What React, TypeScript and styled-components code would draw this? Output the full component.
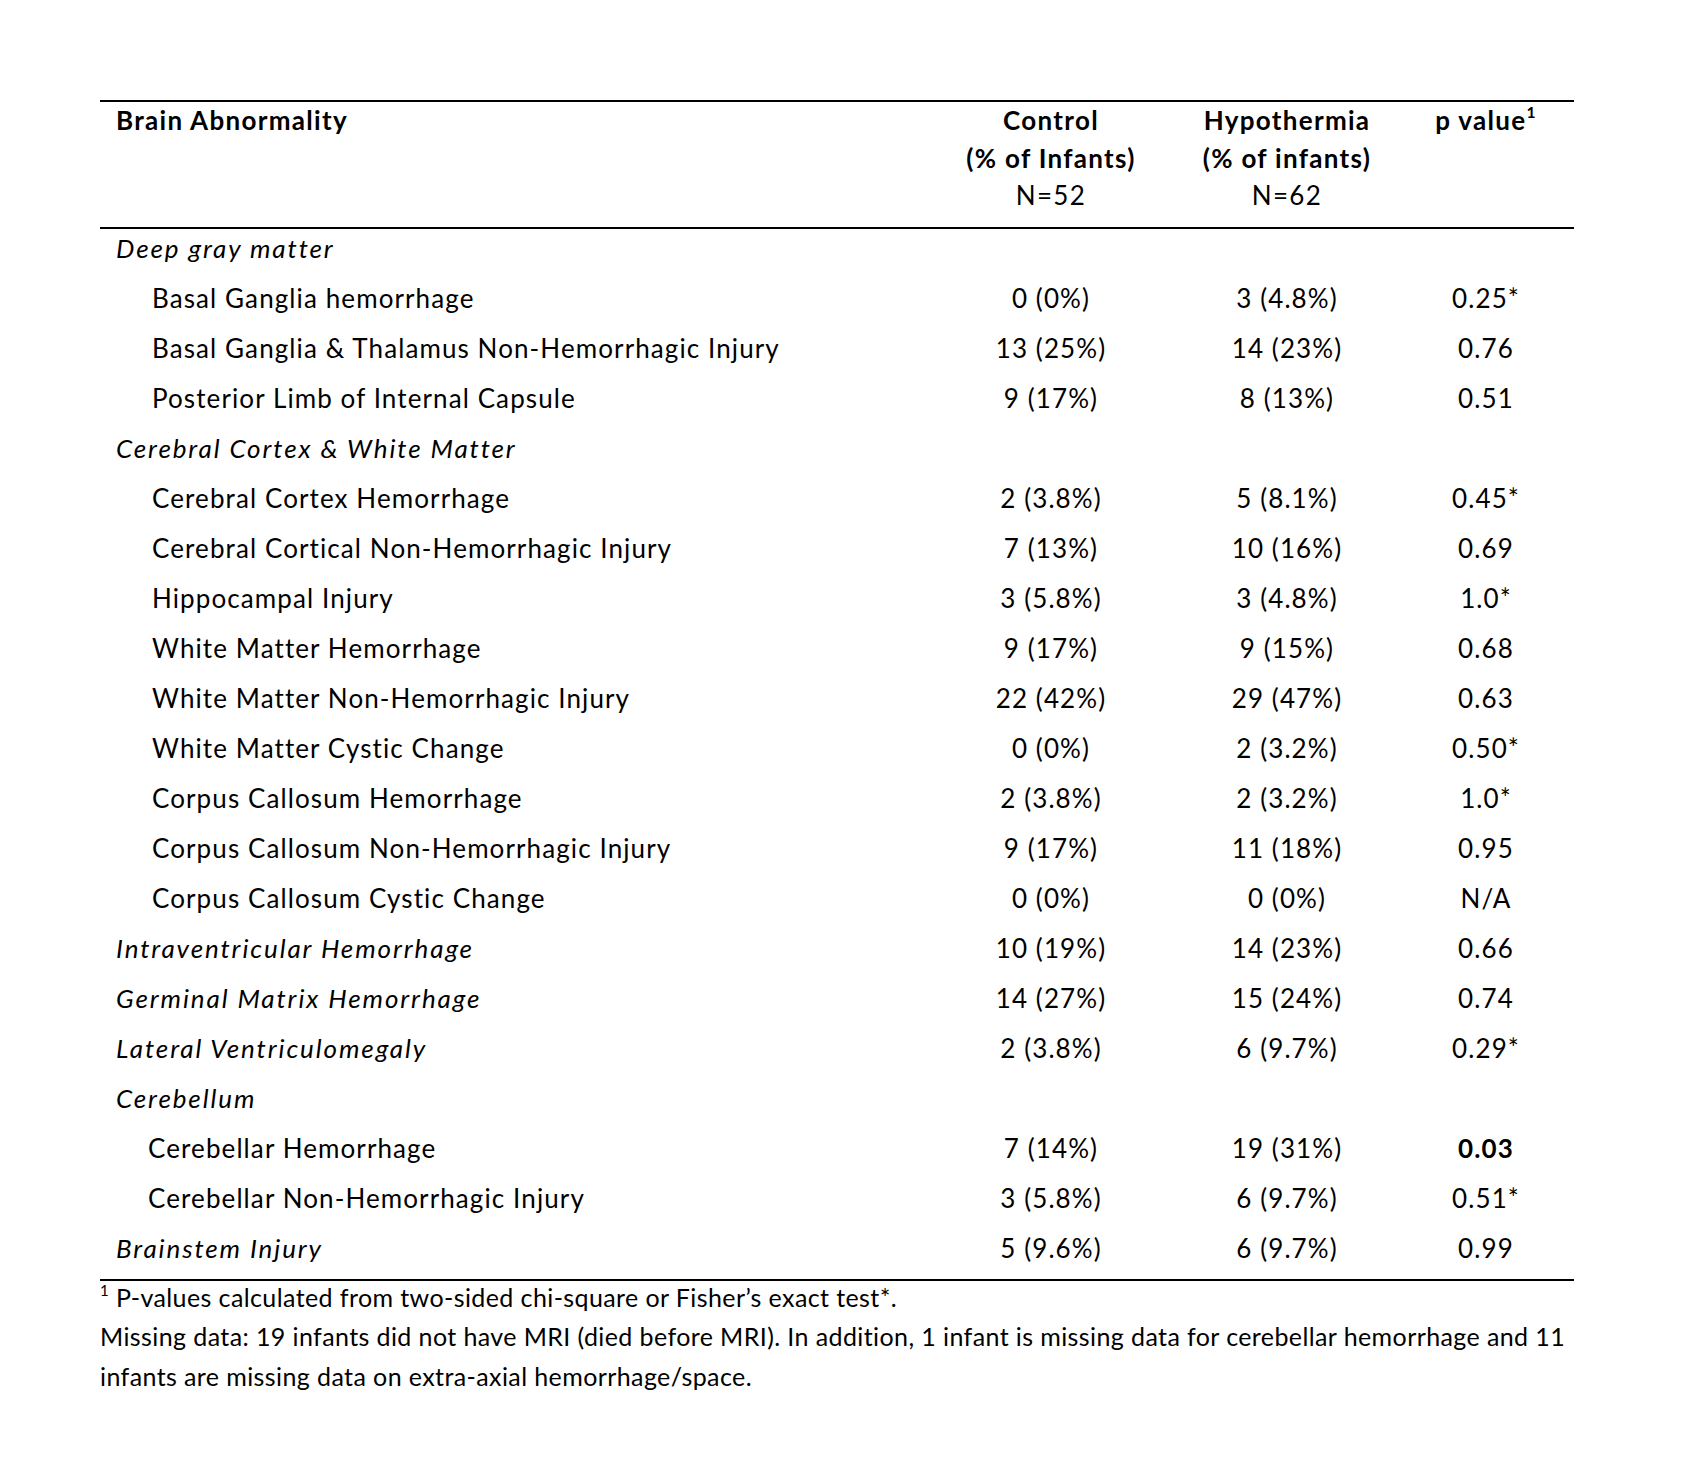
import React from "react";
import styled, { createGlobalStyle } from "styled-components";

const Global = createGlobalStyle`
  html, body { margin: 0; padding: 0; background: #ffffff; }
  body { font-family: Lato, "Open Sans", sans-serif; color: #000; }
`;

const Page = styled.div`
  width: 1700px;
  min-height: 1468px;
  box-sizing: border-box;
  padding: 100px 126px 0 100px;
  background: #fff;
`;

const Table = styled.div`
  display: grid;
  grid-template-columns: 826px 250px 222px 176px;
  border-top: 2px solid #000;
  border-bottom: 2px solid #000;
  font-size: 26px;
  letter-spacing: 1.1px;
`;

const HeadCell = styled.div<{ $center?: boolean }>`
  font-weight: 700;
  line-height: 37.5px;
  padding: 0 0 12px ${(p) => (p.$center ? "0" : "16px")};
  text-align: ${(p) => (p.$center ? "center" : "left")};
  border-bottom: 2px solid #000;
  letter-spacing: 1.3px;
`;

const Light = styled.span`
  font-weight: 400;
`;

const Sup = styled.sup`
  font-size: 0.6em;
  line-height: 0;
  vertical-align: 0.75em;
`;

const Label = styled.div<{ $indent: number; $italic?: boolean }>`
  height: 50px;
  line-height: 38px;
  padding-left: ${(p) => p.$indent}px;
  font-style: ${(p) => (p.$italic ? "italic" : "normal")};
  letter-spacing: ${(p) => (p.$italic ? "1.9px" : "1.1px")};
  white-space: nowrap;
`;

const Value = styled.div<{ $bold?: boolean }>`
  height: 50px;
  line-height: 38px;
  text-align: center;
  font-weight: ${(p) => (p.$bold ? 700 : 400)};
`;

const Notes = styled.div`
  width: 1474px;
  font-size: 25px;
  letter-spacing: 0.4px;
  line-height: 39.5px;
  margin-top: -3px;
  white-space: nowrap;
`;

type Row = {
  label: string;
  kind: "cat" | "sub";
  indent?: number;
  c?: string;
  h?: string;
  p?: string;
  bold?: boolean;
};

const rows: Row[] = [
  { label: "Deep gray matter", kind: "cat" },
  { label: "Basal Ganglia hemorrhage", kind: "sub", c: "0 (0%)", h: "3 (4.8%)", p: "0.25*" },
  { label: "Basal Ganglia & Thalamus Non-Hemorrhagic Injury", kind: "sub", c: "13 (25%)", h: "14 (23%)", p: "0.76" },
  { label: "Posterior Limb of Internal Capsule", kind: "sub", c: "9 (17%)", h: "8 (13%)", p: "0.51" },
  { label: "Cerebral Cortex & White Matter", kind: "cat" },
  { label: "Cerebral Cortex Hemorrhage", kind: "sub", c: "2 (3.8%)", h: "5 (8.1%)", p: "0.45*" },
  { label: "Cerebral Cortical Non-Hemorrhagic Injury", kind: "sub", c: "7 (13%)", h: "10 (16%)", p: "0.69" },
  { label: "Hippocampal Injury", kind: "sub", c: "3 (5.8%)", h: "3 (4.8%)", p: "1.0*" },
  { label: "White Matter Hemorrhage", kind: "sub", c: "9 (17%)", h: "9 (15%)", p: "0.68" },
  { label: "White Matter Non-Hemorrhagic Injury", kind: "sub", c: "22 (42%)", h: "29 (47%)", p: "0.63" },
  { label: "White Matter Cystic Change", kind: "sub", c: "0 (0%)", h: "2 (3.2%)", p: "0.50*" },
  { label: "Corpus Callosum Hemorrhage", kind: "sub", c: "2 (3.8%)", h: "2 (3.2%)", p: "1.0*" },
  { label: "Corpus Callosum Non-Hemorrhagic Injury", kind: "sub", c: "9 (17%)", h: "11 (18%)", p: "0.95" },
  { label: "Corpus Callosum Cystic Change", kind: "sub", c: "0 (0%)", h: "0 (0%)", p: "N/A" },
  { label: "Intraventricular Hemorrhage", kind: "cat", c: "10 (19%)", h: "14 (23%)", p: "0.66" },
  { label: "Germinal Matrix Hemorrhage", kind: "cat", c: "14 (27%)", h: "15 (24%)", p: "0.74" },
  { label: "Lateral Ventriculomegaly", kind: "cat", c: "2 (3.8%)", h: "6 (9.7%)", p: "0.29*" },
  { label: "Cerebellum", kind: "cat" },
  { label: "Cerebellar Hemorrhage", kind: "sub", indent: 48, c: "7 (14%)", h: "19 (31%)", p: "0.03", bold: true },
  { label: "Cerebellar Non-Hemorrhagic Injury", kind: "sub", indent: 48, c: "3 (5.8%)", h: "6 (9.7%)", p: "0.51*" },
  { label: "Brainstem Injury", kind: "cat", c: "5 (9.6%)", h: "6 (9.7%)", p: "0.99" },
];

export default function App() {
  return (
    <Page>
      <Global />
      <Table>
        <HeadCell>Brain Abnormality</HeadCell>
        <HeadCell $center>
          Control
          <br />
          (% of Infants)
          <br />
          <Light>N=52</Light>
        </HeadCell>
        <HeadCell $center>
          Hypothermia
          <br />
          (% of infants)
          <br />
          <Light>N=62</Light>
        </HeadCell>
        <HeadCell $center>
          p value<Sup>1</Sup>
        </HeadCell>
        {rows.map((r, i) => (
          <React.Fragment key={i}>
            <Label $indent={r.kind === "cat" ? 16 : r.indent ?? 52} $italic={r.kind === "cat"}>
              {r.label}
            </Label>
            <Value>{r.c ?? ""}</Value>
            <Value>{r.h ?? ""}</Value>
            <Value $bold={r.bold}>{r.p ?? ""}</Value>
          </React.Fragment>
        ))}
      </Table>
      <Notes>
        <Sup>1</Sup> P-values calculated from two-sided chi-square or Fisher’s exact test*.
        <br />
        Missing data: 19 infants did not have MRI (died before MRI). In addition, 1 infant is missing data for cerebellar hemorrhage and 11
        <br />
        infants are missing data on extra-axial hemorrhage/space.
      </Notes>
    </Page>
  );
}
